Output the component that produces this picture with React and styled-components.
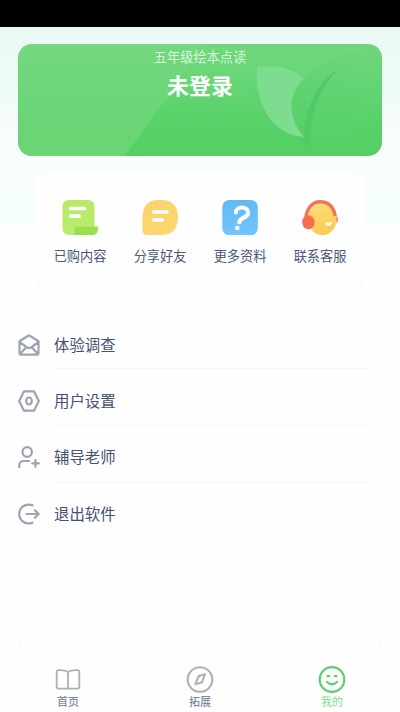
import React from 'react';
import styled, { createGlobalStyle, css } from 'styled-components';

const GlobalStyle = createGlobalStyle`
  * {
    box-sizing: border-box;
  }
  body {
    margin: 0;
    background: #fefefe;
    font-family: 'Noto Sans CJK SC', 'Noto Sans', sans-serif;
  }
`;

// faint rounded edge, only visible in the two bottom corners
const softCorners = css`
  background-image: radial-gradient(
      circle at 100% 0,
      transparent 10px,
      #f5f6f6 11px,
      transparent 12px
    ),
    radial-gradient(circle at 0 0, transparent 10px, #f5f6f6 11px, transparent 12px);
  background-size: 12px 12px;
  background-position: 0 100%, 100% 100%;
  background-repeat: no-repeat;
`;

const Screen = styled.div`
  width: 400px;
  height: 712px;
  overflow: hidden;
  display: flex;
  flex-direction: column;
`;

const StatusBar = styled.div`
  height: 27px;
  flex: none;
  background: #000;
`;

const Content = styled.main`
  flex: 1;
  padding: 17px 18px 0;
  background: linear-gradient(
      180deg,
      #ebfaf6 0,
      #edfbf7 55px,
      #f5fbf8 85px,
      #f9fefc 120px,
      #f5fefc 197px
    )
    no-repeat 0 0 / 100% 197px;
`;

const Banner = styled.section`
  position: relative;
  height: 112px;
  border-radius: 14px;
  overflow: hidden;
  text-align: center;
  color: #fff;
`;

const BannerArt = styled.svg`
  position: absolute;
  top: 0;
  left: 0;
`;

const BannerSubtitle = styled.p`
  position: relative;
  margin: 3px 0 0;
  font-size: 13.2px;
  line-height: 20px;
  color: #d4f7d9;
`;

const BannerTitle = styled.h1`
  position: relative;
  margin: 3px 0 0;
  font-size: 22px;
  line-height: 29px;
  font-weight: 700;
`;

const Shortcuts = styled.nav`
  display: flex;
  height: 117px;
  margin: 17px 17px 0;
  padding: 24px 5px 0;
  border-radius: 12px;
  background-color: #fefefe;
  ${softCorners}
`;

const Shortcut = styled.a`
  width: 80px;
  display: flex;
  flex-direction: column;
  align-items: center;
  font-size: 13.2px;
  line-height: 20px;
  color: #4b5878;
  svg {
    margin-bottom: 11px;
  }
`;

const Menu = styled.ul`
  margin: 22px 0 0;
  padding: 0;
  height: 341px;
  list-style: none;
  ${softCorners}
`;

const MenuItem = styled.li`
  display: flex;
  align-items: center;
  height: 57px;
  color: #9da3b2;
`;

const MenuLabel = styled.span`
  flex: 1;
  display: flex;
  align-items: center;
  height: 100%;
  margin: 0 12px 0 14px;
  padding-bottom: 1px;
  font-size: 15.4px;
  color: #445170;
  border-bottom: 1px solid ${(props) => (props.$last ? 'transparent' : '#f4f4f6')};
  span {
    margin-top: ${(props) => props.$offset}px;
  }
`;

const MenuIcon = styled.svg`
  margin: ${(props) => props.$offset}px 0 0;
  fill: none;
  stroke: currentColor;
  stroke-width: 2.2;
  stroke-linecap: round;
  stroke-linejoin: round;
`;

const TabBar = styled.nav`
  display: flex;
  flex: none;
  height: 52px;
  padding: 5px 2px 0;
  background: #fefefe;
`;

const Tab = styled.a`
  width: 132px;
  display: flex;
  flex-direction: column;
  align-items: center;
  font-size: 11px;
  line-height: 16px;
  font-weight: ${(props) => (props.$active ? 400 : 500)};
  color: ${(props) => (props.$active ? '#83dd91' : '#7e88a2')};
  svg {
    fill: none;
    stroke: ${(props) => (props.$active ? '#5ccd70' : '#b0b0b0')};
    stroke-linecap: round;
    stroke-linejoin: round;
  }
`;

function Leaves() {
  return (
    <BannerArt width="364" height="112" viewBox="0 0 364 112">
      <defs>
        <linearGradient id="base" x1="0" y1="0" x2="0" y2="1">
          <stop offset="0" stopColor="#72d77d" />
          <stop offset="0.35" stopColor="#65d675" />
          <stop offset="0.65" stopColor="#59d269" />
          <stop offset="1" stopColor="#53cf62" />
        </linearGradient>
        <linearGradient id="shine" x1="0" y1="0" x2="0" y2="1">
          <stop offset="0" stopColor="#7bd883" stopOpacity="0.35" />
          <stop offset="1" stopColor="#72d77d" stopOpacity="0.7" />
        </linearGradient>
        <linearGradient id="leaf" x1="1" y1="0" x2="0.2" y2="1">
          <stop offset="0" stopColor="#68d278" stopOpacity="0.4" />
          <stop offset="1" stopColor="#58cf6a" />
        </linearGradient>
      </defs>
      <rect width="364" height="112" fill="url(#base)" />
      <path d="M0 0H188L107 112H0Z" fill="url(#shine)" />
      <path
        d="M364 3C325 5 294 25 281 41C265 60 272 82 287 101C327 100 354 78 364 42Z"
        fill="url(#leaf)"
        opacity="0.6"
      />
      <path
        d="M239 23C258 20 277 25 286 35C270 48 269 74 286 93C258 91 236 65 239 23Z"
        fill="#7ddc90"
      />
      <path
        d="M286 101C285 68 296 42 319 26C303 45 293 62 292 101Z"
        fill="#51c966"
      />
    </BannerArt>
  );
}

function PurchasedIcon() {
  return (
    <svg width="38" height="38" viewBox="0 0 38 38">
      <defs>
        <linearGradient id="lime" x1="0" y1="0" x2="0" y2="1">
          <stop offset="0" stopColor="#b9e865" />
          <stop offset="1" stopColor="#b6ee6e" />
        </linearGradient>
      </defs>
      <path
        d="M8 3H27Q33.5 3 33.5 10V38H8Q1.5 38 1.5 31V10Q1.5 3 8 3Z"
        fill="url(#lime)"
      />
      <path d="M14 29.5H37V32Q37 38 31 38H13Z" fill="#9edf50" />
      <path
        d="M9.7 11.5H23.5M9.7 19.2H18"
        stroke="#fff"
        strokeWidth="3.7"
        strokeLinecap="round"
      />
    </svg>
  );
}

function ShareIcon() {
  return (
    <svg width="38" height="38" viewBox="0 0 38 38">
      <defs>
        <linearGradient id="amber" x1="0" y1="0" x2="0.5" y2="1">
          <stop offset="0" stopColor="#f8d373" />
          <stop offset="1" stopColor="#ffd66d" />
        </linearGradient>
      </defs>
      <path
        d="M15 3H23Q37 5 37 20.5Q36 38 21 38H6Q1.5 38 1.5 33V20Q1.5 5 15 3Z"
        fill="url(#amber)"
      />
      <path
        d="M12.8 15H25.8M12.8 23H21.3"
        stroke="#fff"
        strokeWidth="3.7"
        strokeLinecap="round"
      />
    </svg>
  );
}

function MoreIcon() {
  return (
    <svg width="38" height="38" viewBox="0 0 38 38">
      <defs>
        <linearGradient id="sky" x1="0" y1="0" x2="0" y2="1">
          <stop offset="0" stopColor="#62b8f3" />
          <stop offset="1" stopColor="#72c6ff" />
        </linearGradient>
      </defs>
      <rect x="1.3" y="3" width="35.5" height="35.3" rx="7" fill="url(#sky)" />
      <path
        d="M14.8 15.5C15 9 26.5 8.5 27.2 15.5C27.5 21 19 20 18.3 25.2"
        fill="none"
        stroke="#fff"
        strokeWidth="4.1"
        strokeLinecap="round"
      />
      <circle cx="16.3" cy="31" r="2.3" fill="#fff" />
    </svg>
  );
}

function SupportIcon() {
  return (
    <svg width="38" height="38" viewBox="0 0 38 38">
      <defs>
        <linearGradient id="face" x1="0" y1="0" x2="0.3" y2="1">
          <stop offset="0" stopColor="#ffe07a" />
          <stop offset="1" stopColor="#fcca56" />
        </linearGradient>
      </defs>
      <ellipse cx="34.7" cy="22.5" rx="2.2" ry="3.4" fill="#e97755" />
      <ellipse cx="21.3" cy="22" rx="14.4" ry="16.2" fill="url(#face)" />
      <path
        d="M4.8 21C6 11 11.5 4.8 19 4.7C27 4.7 32.5 9.5 34.3 19"
        fill="none"
        stroke="#ef7657"
        strokeWidth="3.4"
      />
      <ellipse cx="7.4" cy="25.3" rx="6.2" ry="7" fill="#f66f50" />
      <path d="M24 25.3Q27.5 26.5 31.2 25Q30.7 29 27.6 29Q24.5 29 24 25.3Z" fill="#fff" />
    </svg>
  );
}

const shortcuts = [
  { label: '已购内容', icon: <PurchasedIcon /> },
  { label: '分享好友', icon: <ShareIcon /> },
  { label: '更多资料', icon: <MoreIcon /> },
  { label: '联系客服', icon: <SupportIcon /> },
];

const menu = [
  {
    label: '体验调查',
    offset: 9,
    icon: <path d="M1.5 7.2L11 1.3L20.5 7.2V18.7Q20.5 20.7 18.5 20.7H3.5Q1.5 20.7 1.5 18.7ZM2 8.5L8.5 13Q11 15 13.5 13L20 8.5M2.5 19.5L8.5 13M19.5 19.5L13.5 13" />,
  },
  {
    label: '用户设置',
    offset: 7,
    icon: (
      <>
        <path d="M6 1.3H16L20.8 11L16 20.7H6L1.2 11Z" />
        <ellipse cx="11" cy="11" rx="2.8" ry="3.5" />
      </>
    ),
  },
  {
    label: '辅导老师',
    offset: 4,
    icon: (
      <>
        <ellipse cx="9.2" cy="6" rx="4.7" ry="4.8" />
        <path d="M1.3 21V19.5Q1.3 15 6 15H11M17.5 14V20.8M14.2 17.4H20.8" />
      </>
    ),
  },
  {
    label: '退出软件',
    offset: 5,
    icon: <path d="M14.5 2.3C7.5-.3 1.2 4.5 1.2 11C1.2 17.5 7.5 22.3 14.5 19.7M8.5 11H20.5M16.8 7.3L20.7 11L16.8 14.7" />,
  },
];

function App() {
  return (
    <Screen>
      <GlobalStyle />
      <StatusBar />
      <Content>
        <Banner>
          <Leaves />
          <BannerSubtitle>五年级绘本点读</BannerSubtitle>
          <BannerTitle>未登录</BannerTitle>
        </Banner>
        <Shortcuts>
          {shortcuts.map((item) => (
            <Shortcut key={item.label}>
              {item.icon}
              {item.label}
            </Shortcut>
          ))}
        </Shortcuts>
        <Menu>
          {menu.map((item, i) => (
            <MenuItem key={item.label}>
              <MenuIcon width="22" height="22" viewBox="0 0 22 22" $offset={item.offset}>
                {item.icon}
              </MenuIcon>
              <MenuLabel $offset={item.offset} $last={i === menu.length - 1}>
                <span>{item.label}</span>
              </MenuLabel>
            </MenuItem>
          ))}
        </Menu>
      </Content>
      <TabBar>
        <Tab>
          <svg width="28" height="28" viewBox="0 0 28 28" strokeWidth="1.8">
            <path d="M14 7.5C12 4.8 8 5 4 5.2Q2.7 5.3 2.7 7V21.8Q2.7 23.6 4.5 23.6H23.5Q25.3 23.6 25.3 21.8V7Q25.3 5.3 24 5.2C20 5 16 4.8 14 7.5ZM14 7.5V23" />
          </svg>
          首页
        </Tab>
        <Tab>
          <svg width="28" height="28" viewBox="0 0 28 28" strokeWidth="2.1">
            <circle cx="14" cy="14.5" r="12.3" />
            <path d="M19 9.2L12.8 11L9.3 19.2L15.8 17.6Z" />
          </svg>
          拓展
        </Tab>
        <Tab $active>
          <svg width="28" height="28" viewBox="0 0 28 28" strokeWidth="2.2">
            <circle cx="14" cy="14.5" r="12.3" />
            <path d="M9.5 11.2H11.3M16.9 11.2H18.3M9 17Q14 21.5 19 17" />
          </svg>
          我的
        </Tab>
      </TabBar>
    </Screen>
  );
}

export default App;
